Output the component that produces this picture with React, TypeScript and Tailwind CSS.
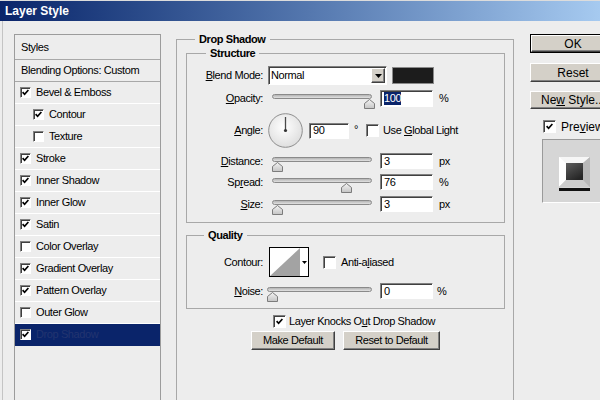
import React from "react";

const sunken =
  "bg-white border border-t-[#808080] border-l-[#808080] border-b-white border-r-white shadow-[inset_1px_1px_0_#404040]";
const raised =
  "bg-[#d4d0c8] border border-t-white border-l-white border-b-[#404040] border-r-[#404040] shadow-[inset_-1px_-1px_0_#808080]";

function CheckBox({ checked, small }: { checked: boolean; small?: boolean }) {
  return (
    <span
      className={`${small ? "w-[11px] h-[11px]" : "w-[13px] h-[13px]"} shrink-0 flex items-center justify-center ${sunken}`}
    >
      {checked && (
        <svg width="7" height="7" viewBox="0 0 7 7">
          <path d="M0.6 3.2 L2.6 5.3 L6.4 1" stroke="#000" strokeWidth="1.7" fill="none" />
        </svg>
      )}
    </span>
  );
}

function Slider({ w, wClass, value, max }: { w: number; wClass: string; value: number; max: number }) {
  const center = 5 + (value / max) * (w - 8);
  return (
    <div className={`relative ${wClass} h-full shrink-0`}>
      <div className="mt-[4px] h-[5px] rounded-full border border-[#8a8a8a] bg-linear-to-b from-[#b4b4b4] to-[#e2e2e2]" />
      <svg
        className="absolute top-[5px]"
        style={{ left: center - 5.5 }}
        width="11"
        height="10"
        viewBox="0 0 11 10"
      >
        <defs>
          <linearGradient id="th" x1="0" y1="0" x2="0" y2="1">
            <stop offset="0" stopColor="#f4f4f4" />
            <stop offset="1" stopColor="#c4c4c4" />
          </linearGradient>
        </defs>
        <path d="M0.5 4.5 L5.5 0.5 L10.5 4.5 L10.5 9.5 L0.5 9.5 Z" fill="url(#th)" stroke="#7c7c7c" strokeWidth="1" />
      </svg>
    </div>
  );
}

function Field({
  value,
  wClass = "w-[53px]",
  hClass = "h-[16px]",
  selected,
}: {
  value: string;
  wClass?: string;
  hClass?: string;
  selected?: boolean;
}) {
  return (
    <div className={`${wClass} ${hClass} ${sunken} flex items-center pl-[3px] shrink-0`}>
      {selected ? <span className="bg-[#0a246a] text-white leading-[13px]">{value}</span> : <span>{value}</span>}
    </div>
  );
}

function Label({ children }: { children: React.ReactNode }) {
  return <div className="w-[76px] shrink-0 text-right">{children}</div>;
}

const items: { name: string; checked: boolean; indent?: boolean; selected?: boolean }[] = [
  { name: "Bevel & Emboss", checked: true },
  { name: "Contour", checked: true, indent: true },
  { name: "Texture", checked: false, indent: true },
  { name: "Stroke", checked: true },
  { name: "Inner Shadow", checked: true },
  { name: "Inner Glow", checked: true },
  { name: "Satin", checked: true },
  { name: "Color Overlay", checked: false },
  { name: "Gradient Overlay", checked: true },
  { name: "Pattern Overlay", checked: true },
  { name: "Outer Glow", checked: false },
  { name: "Drop Shadow", checked: true, selected: true },
];

export default function App() {
  return (
    <div className="w-[600px] h-[400px] overflow-hidden bg-[#ededed] text-[11px] tracking-[-0.4px] text-black font-['Liberation_Sans',Arial,sans-serif]">
      {/* Title bar */}
      <div className="h-[21px] border-t border-t-[#dcdcdc] bg-linear-to-r from-[#0a246a] to-[#a6caf0] flex items-center pl-[5px]">
        <span className="text-white font-bold text-[12px] tracking-normal">Layer Style</span>
      </div>

      {/* Body */}
      <div className="flex h-[379px] ml-[2px] border-l border-[#c4c4c4]">
        {/* Left styles list */}
        <div className="ml-[11px] mt-[13px] w-[147px] h-[400px] shrink-0 border border-[#9c9c9c]">
          <div className="h-[25px] border-b border-[#a8a8a8] flex items-center pl-[6px]">Styles</div>
          <div className="h-[22px] border-b border-[#a8a8a8] flex items-center pl-[6px]">Blending Options: Custom</div>
          {items.map((it) => (
            <div
              key={it.name}
              className={`h-[22px] border-b flex items-center ${it.indent ? "pl-[18px]" : "pl-[5px]"} ${
                it.selected ? "bg-[#0a246a] text-[#223470] border-[#0a246a]" : "border-white"
              }`}
            >
              <CheckBox checked={it.checked} small />
              <span className="ml-[5px]">{it.name}</span>
            </div>
          ))}
        </div>

        {/* Middle */}
        <fieldset className="ml-[15px] mt-[12px] w-[338px] h-[390px] shrink-0 border border-[#a8a8a8] pl-[9px] pr-[8px]">
          <legend className="ml-[9px] px-[4px] font-bold leading-[13px]">Drop Shadow</legend>

          {/* Structure */}
          <fieldset className="mt-[1px] border border-[#a8a8a8] pb-[10px]">
            <legend className="ml-[19px] px-[4px] font-bold leading-[13px]">Structure</legend>

            <div className="mt-[6px] h-[19px] flex items-center">
              <Label>
                <u>B</u>lend Mode:
              </Label>
              <div className={`ml-[5px] w-[119px] h-[19px] ${sunken} flex items-center`}>
                <span className="pl-[2px] flex-1">Normal</span>
                <div className={`w-[14px] h-[15px] mr-[1px] ${raised} flex items-center justify-center`}>
                  <svg width="7" height="4" viewBox="0 0 7 4">
                    <path d="M0 0H7L3.5 4Z" fill="#000" />
                  </svg>
                </div>
              </div>
              <div className="ml-[5px] w-[42px] h-[17px] bg-[#1c1c1c] border border-[#8a8a8a]" />
            </div>

            <div className="mt-[5px] h-[17px] flex items-center">
              <Label>
                <u>O</u>pacity:
              </Label>
              <div className="ml-[9px] h-full">
                <Slider w={100} wClass="w-[100px]" value={100} max={100} />
              </div>
              <div className="ml-[8px]">
                <Field value="100" hClass="h-[17px]" selected />
              </div>
              <span className="ml-[6px]">%</span>
            </div>

            <div className="mt-[6px] h-[35px] flex items-center">
              <Label>
                <u>A</u>ngle:
              </Label>
              <svg className="ml-[5px] shrink-0" width="35" height="35" viewBox="0 0 35 35">
                <defs>
                  <radialGradient id="dial" cx="0.45" cy="0.4" r="0.65">
                    <stop offset="0" stopColor="#ffffff" />
                    <stop offset="1" stopColor="#dcdcdc" />
                  </radialGradient>
                </defs>
                <circle cx="17.5" cy="17.5" r="16.8" fill="url(#dial)" stroke="#8e8e8e" strokeWidth="1" />
                <line x1="17.5" y1="17.5" x2="17.5" y2="4" stroke="#4a4a4a" strokeWidth="1.3" />
                <circle cx="17.5" cy="17.5" r="1.6" fill="#333" />
              </svg>
              <div className="ml-[6px]">
                <Field value="90" wClass="w-[40px]" />
              </div>
              <span className="self-start mt-[10px] leading-[13px] w-[17px] pl-[5px] shrink-0">°</span>
              <CheckBox checked={false} />
              <span className="ml-[4px]">
                Use <u>G</u>lobal Light
              </span>
            </div>

            <div className="mt-[5px] h-[16px] flex items-center">
              <Label>
                <u>D</u>istance:
              </Label>
              <div className="ml-[9px] h-full">
                <Slider w={100} wClass="w-[100px]" value={3} max={1000} />
              </div>
              <div className="ml-[8px]">
                <Field value="3" />
              </div>
              <span className="ml-[6px]">px</span>
            </div>

            <div className="mt-[5px] h-[16px] flex items-center">
              <Label>
                Sp<u>r</u>ead:
              </Label>
              <div className="ml-[9px] h-full">
                <Slider w={100} wClass="w-[100px]" value={76} max={100} />
              </div>
              <div className="ml-[8px]">
                <Field value="76" />
              </div>
              <span className="ml-[6px]">%</span>
            </div>

            <div className="mt-[6px] h-[16px] flex items-center">
              <Label>
                <u>S</u>ize:
              </Label>
              <div className="ml-[9px] h-full">
                <Slider w={100} wClass="w-[100px]" value={3} max={1000} />
              </div>
              <div className="ml-[8px]">
                <Field value="3" />
              </div>
              <span className="ml-[6px]">px</span>
            </div>
          </fieldset>

          {/* Quality */}
          <fieldset className="mt-[6px] border border-[#a8a8a8] pb-[9px]">
            <legend className="ml-[17px] px-[4px] font-bold leading-[13px]">Quality</legend>

            <div className="mt-[5px] h-[30px] flex items-center">
              <Label>Contour:</Label>
              <div className="ml-[6px] w-[40px] h-[30px] border border-black bg-white flex shrink-0">
                <svg width="30" height="28" viewBox="0 0 30 28" className="shrink-0">
                  <polygon points="0,28 30,0 30,28" fill="#a3a3a3" />
                </svg>
                <div className="flex-1 flex items-center justify-center">
                  <svg width="5" height="3" viewBox="0 0 5 3">
                    <path d="M0 0H5L2.5 3Z" fill="#000" />
                  </svg>
                </div>
              </div>
              <div className="ml-[14px]">
                <CheckBox checked={false} />
              </div>
              <span className="ml-[5px]">
                Anti-a<u>l</u>iased
              </span>
            </div>

            <div className="mt-[6px] h-[16px] flex items-center">
              <Label>
                <u>N</u>oise:
              </Label>
              <div className="ml-[4px] h-full">
                <Slider w={105} wClass="w-[105px]" value={0} max={100} />
              </div>
              <div className="ml-[8px]">
                <Field value="0" />
              </div>
              <span className="ml-[4px]">%</span>
            </div>
          </fieldset>

          <div className="mt-[6px] h-[13px] flex items-center ml-[87px]">
            <CheckBox checked />
            <span className="ml-[3px]">
              Layer Knocks O<u>u</u>t Drop Shadow
            </span>
          </div>

          <div className="mt-[3px] h-[19px] flex ml-[65px]">
            <div className={`w-[84px] h-[19px] ${raised} flex items-center justify-center`}>
              <span>Make Default</span>
            </div>
            <div className={`ml-[8px] w-[97px] h-[19px] ${raised} flex items-center justify-center`}>
              <span>Reset to Default</span>
            </div>
          </div>
        </fieldset>

        {/* Right column */}
        <div className="ml-[16px] mt-[13px] w-[86px] shrink-0 flex flex-col">
          <div className="h-[19px] border border-black">
            <div className={`h-[17px] ${raised} flex items-center justify-center text-[12px] tracking-normal`}>
              <span>OK</span>
            </div>
          </div>
          <div className={`mt-[10px] h-[19px] ${raised} flex items-center justify-center text-[12px] tracking-normal`}>
            <span>Reset</span>
          </div>
          <div className={`mt-[9px] h-[18px] ${raised} flex items-center justify-center text-[12px] tracking-normal`}>
            <span className="whitespace-nowrap">
              Ne<u>w</u> Style...
            </span>
          </div>
          <div className="mt-[11px] h-[13px] flex items-center ml-[13px]">
            <CheckBox checked />
            <span className="ml-[5px] text-[12px] tracking-normal">
              Pre<u>v</u>iew
            </span>
          </div>
          <div className="mt-[6px] ml-[12px] w-[70px] h-[64px] bg-[#d6d6d6] border border-t-[#9a9a9a] border-l-[#9a9a9a] border-b-white border-r-white pl-[16px] pt-[17px]">
            <svg width="31" height="34" viewBox="0 0 31 34">
              <defs>
                <linearGradient id="outer" x1="0" y1="0" x2="1" y2="1">
                  <stop offset="0" stopColor="#ffffff" />
                  <stop offset="1" stopColor="#a0a0a0" />
                </linearGradient>
                <linearGradient id="inner" x1="0" y1="0" x2="0.6" y2="1">
                  <stop offset="0" stopColor="#5e5e5e" />
                  <stop offset="1" stopColor="#262626" />
                </linearGradient>
              </defs>
              <rect x="0" y="0" width="31" height="30" fill="url(#outer)" />
              <polygon points="0,0 31,0 24,6 7,6" fill="#f6f6f6" />
              <polygon points="0,0 7,6 7,23 0,30" fill="#ffffff" />
              <polygon points="31,0 31,30 24,23 24,6" fill="#b8b8b8" />
              <polygon points="0,30 7,23 24,23 31,30" fill="#cdcdcd" />
              <rect x="7" y="6" width="17" height="17" fill="url(#inner)" />
              <rect x="0" y="31" width="31" height="3" fill="#111" />
            </svg>
          </div>
        </div>
      </div>
    </div>
  );
}
